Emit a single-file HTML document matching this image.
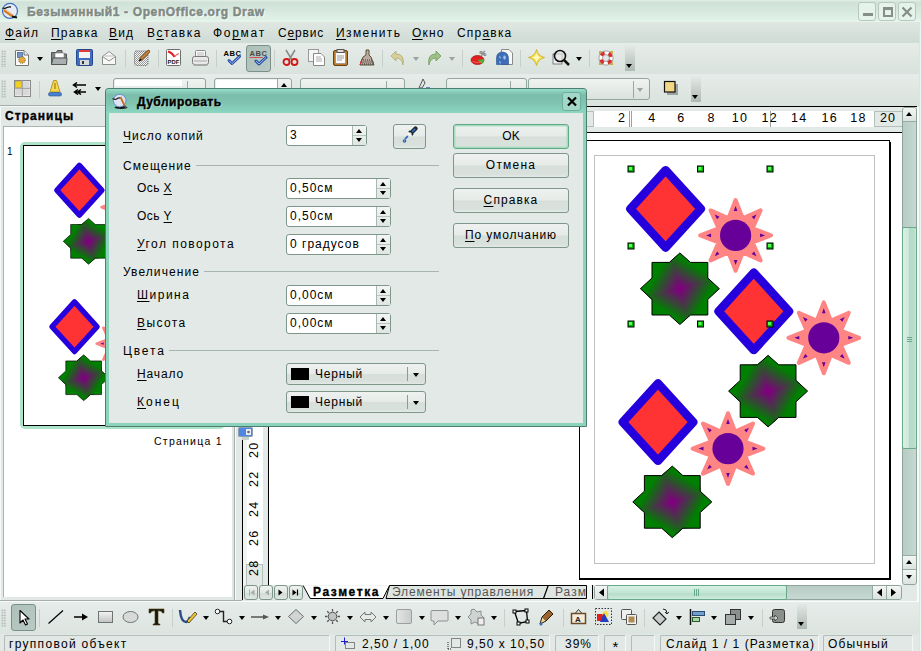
<!DOCTYPE html>
<html><head><meta charset="utf-8">
<style>
*{box-sizing:border-box}
html,body{margin:0;padding:0}
body{width:921px;height:651px;overflow:hidden;position:relative;background:#e2e8e5;font-family:"Liberation Sans",sans-serif;font-size:12px;line-height:1;color:#000;letter-spacing:1px;white-space:nowrap}
.a{position:absolute}
u{text-decoration:underline;text-decoration-thickness:1px;text-underline-offset:2px}
#title{left:0;top:0;width:921px;height:22px;background:linear-gradient(#e4f0e8 0,#d0e1d7 10%,#d5e6dc 40%,#dff1e6 85%,#e6f6ec)}
#menu{left:0;top:22px;width:919px;height:21px;background:linear-gradient(#e0e7e3,#cfdbd5)}
#tb1{left:0;top:43px;width:919px;height:31px;background:linear-gradient(#e6ece9,#d9e2dd)}
#tb2{left:0;top:74px;width:919px;height:32px;background:linear-gradient(#e6ece9,#d9e2dd)}
#rborder{left:919px;top:22px;width:2px;height:629px;background:linear-gradient(90deg,#d3e9de 50%,#e8f7ef 50%)}
.mi{top:27px;font-size:12px;letter-spacing:1.2px}
.grip{width:5px;background-image:radial-gradient(circle,#a4b0aa 0.7px,transparent 1px);background-size:2.6px 2.6px}
.sep{width:1px;background:#c6cfca}
.dd{width:0;height:0;border-left:3.5px solid transparent;border-right:3.5px solid transparent;border-top:4px solid #000}
.ddg{border-top-color:#9aa5a0}
.ic{position:absolute}
.lbl{font-size:12px}
.spin{position:absolute;height:21px;background:#fff;border:1px solid #7f968b;border-radius:3px}
.spin .b{position:absolute;right:0;top:0;width:14px;height:19px;border-left:1px solid #a9b8b0;background:linear-gradient(#f2f5f3,#dfe6e2)}
.spin .b:after{content:"";position:absolute;left:0;right:0;top:9px;height:1px;background:#b9c6bf}
.up{position:absolute;left:3px;top:3px;width:0;height:0;border-left:3.5px solid transparent;border-right:3.5px solid transparent;border-bottom:4px solid #000}
.dn{position:absolute;left:3px;top:12px;width:0;height:0;border-left:3.5px solid transparent;border-right:3.5px solid transparent;border-top:4px solid #000}
.spin .t{position:absolute;left:3px;top:3px;font-size:12px}
.btn{position:absolute;left:453px;width:116px;height:25px;border:1px solid #7f968b;border-radius:3px;background:linear-gradient(#eef1ef 0%,#e6ebe8 48%,#d6dfda 52%,#d9e1dd 88%,#e3e9e6 100%);text-align:center}
.btn span{position:absolute;left:0;right:0;top:5px}
.combo{position:absolute;border:1px solid #7f968b;border-radius:3px;background:linear-gradient(#eef1ef 0%,#e6ebe8 48%,#d6dfda 52%,#d9e1dd 88%,#e3e9e6 100%)}
.gline{position:absolute;height:1px;background:#a7b5ae}
.st{position:absolute;top:635px;height:16px;border:1px solid #b3bdb8;border-right-color:#f4f8f6;border-bottom:none;border-radius:2px 2px 0 0}
.stt{position:absolute;top:638px;font-size:12px;letter-spacing:1.2px}
.rn{position:absolute;top:112px;font-size:12.5px;letter-spacing:1.2px}
.vn{position:absolute;font-size:12.5px;letter-spacing:1.3px;transform:rotate(-90deg);transform-origin:0 0}
</style></head><body>
<!-- title bar -->
<div class="a" id="title"></div>
<div class="a" id="rborder"></div>
<svg class="ic" style="left:0;top:0" width="22" height="22" viewBox="0 0 22 22">
 <circle cx="10" cy="10.9" r="7.5" fill="#e6ebf5" stroke="#3f6fc0" stroke-width="1.2"/>
 <path d="M4 10 L12.5 16" stroke="#d8791e" stroke-width="3"/>
 <path d="M4.5 9.2 L12.5 14.8" stroke="#f4e0c0" stroke-width="0.8"/>
 <path d="M2.5 8 Q5 9 7 7.5 Q9 6.5 11 7" stroke="#111" stroke-width="1.3" fill="none"/>
 <path d="M12 16.5 L17 17.5" stroke="#111" stroke-width="2"/>
</svg>
<div class="a" style="left:27px;top:6px;font-weight:bold;font-size:12px;color:#7f8a84;-webkit-text-stroke:0.5px #7f8a84;text-shadow:0 0 2px #fff,1px 1px 1px #fff;letter-spacing:0.63px">Безымянный1 - OpenOffice.org Draw</div>
<!-- window buttons -->
<div class="a" style="left:858px;top:2px;width:18px;height:19px;border:1px solid #b7c8be;border-radius:3px;background:#e6f3eb"></div>
<div class="a" style="left:878px;top:2px;width:18px;height:19px;border:1px solid #b7c8be;border-radius:3px;background:#e6f3eb"></div>
<div class="a" style="left:898px;top:2px;width:18px;height:19px;border:1px solid #b7c8be;border-radius:3px;background:#e6f3eb"></div>
<div class="a" style="left:863px;top:13px;width:10px;height:3px;background:#858f8a"></div>
<div class="a" style="left:883px;top:7px;width:10px;height:10px;border:2px solid #858f8a;border-top-width:3px"></div>
<svg class="ic" style="left:901px;top:6px" width="12" height="12"><path d="M1.5 1.5L10.5 10.5M10.5 1.5L1.5 10.5" stroke="#858f8a" stroke-width="2.2"/></svg>

<!-- menu -->
<div class="a" id="menu"></div>
<div class="a mi" style="left:5px"><u>Ф</u>айл</div>
<div class="a mi" style="left:51px"><u>П</u>равка</div>
<div class="a mi" style="left:109px"><u>В</u>ид</div>
<div class="a mi" style="left:147px;letter-spacing:1.45px">В<u>с</u>тавка</div>
<div class="a mi" style="left:213px;letter-spacing:1.7px">Фо<u>р</u>мат</div>
<div class="a mi" style="left:278px;letter-spacing:0.85px">С<u>е</u>рвис</div>
<div class="a mi" style="left:336px;letter-spacing:1.4px"><u>И</u>зменить</div>
<div class="a mi" style="left:412px"><u>О</u>кно</div>
<div class="a mi" style="left:457px">Спр<u>а</u>вка</div>

<!-- toolbars -->
<div class="a" id="tb1"></div>
<div class="a" id="tb2"></div>
<div class="a grip" style="left:1px;top:50px;height:17px"></div>
<!-- new -->
<svg class="ic" style="left:14px;top:49px" width="16" height="18"><path d="M1.5 1.5 H10 L14.5 6 V16.5 H1.5Z" fill="#fbfbfa" stroke="#777"/><path d="M10 1.5 V6 H14.5" fill="#e6e6e6" stroke="#777"/><rect x="3.5" y="3.5" width="5" height="5" fill="#6f95d0" stroke="#3a5a90" stroke-width="0.7"/><circle cx="8" cy="11" r="3.3" fill="#e2a840" stroke="#7a5a20" stroke-dasharray="1 1"/></svg>
<div class="a dd" style="left:37px;top:57px"></div>
<!-- open -->
<svg class="ic" style="left:50px;top:49px" width="18" height="17"><path d="M1.5 3.5 H6 L7.5 1.5 H12 V5 H16.5 V15.5 H1.5Z" fill="#7d8387" stroke="#555"/><rect x="5" y="4" width="9" height="5" fill="#fff" stroke="#777" stroke-width="0.6"/><path d="M1.5 15.5 L3 9 H17 L16.5 15.5Z" fill="#a9aeb0" stroke="#555"/></svg>
<!-- save -->
<svg class="ic" style="left:76px;top:49px" width="17" height="17"><rect x="0.5" y="0.5" width="16" height="16" rx="1" fill="#3e6ec0" stroke="#24488a"/><rect x="3" y="1" width="11" height="2" fill="#e23a3a"/><rect x="3" y="3" width="11" height="6" fill="#f4f4f4"/><rect x="4" y="11" width="9" height="5" fill="#d6d9dc"/><rect x="6" y="12" width="2" height="3" fill="#333"/></svg>
<!-- mail -->
<svg class="ic" style="left:101px;top:50px" width="16" height="16"><path d="M1.5 6.5 L8 1.5 L14.5 6.5 V14.5 H1.5Z" fill="#f8f8f8" stroke="#8a8f8c"/><path d="M1.5 6.5 L8 11 L14.5 6.5" fill="none" stroke="#8a8f8c"/><path d="M3.5 6 H12.5" stroke="#bbb"/></svg>
<div class="a sep" style="left:125px;top:50px;height:17px"></div>
<!-- edit -->
<svg class="ic" style="left:133px;top:49px" width="18" height="18">
 <defs><pattern id="chk" width="2" height="2" patternUnits="userSpaceOnUse"><rect width="2" height="2" fill="#f4f4f4"/><rect width="1" height="1" fill="#9a9a9a"/><rect x="1" y="1" width="1" height="1" fill="#9a9a9a"/></pattern></defs>
 <rect x="1.5" y="2" width="13.5" height="14.5" rx="2" fill="url(#chk)" stroke="#444" stroke-width="0.8" stroke-dasharray="1 1"/>
 <path d="M15.5 2.5 L8 10" stroke="#7a4a1a" stroke-width="3.2" stroke-linecap="round"/>
 <path d="M15.5 2.5 L8 10" stroke="#d08a40" stroke-width="1.6" stroke-linecap="round"/>
 <path d="M8 10 L6.2 12" stroke="#111" stroke-width="1.6"/>
</svg>
<div class="a sep" style="left:158px;top:50px;height:17px"></div>
<!-- pdf -->
<svg class="ic" style="left:166px;top:49px" width="16" height="17">
 <rect x="0.5" y="0.5" width="14" height="16" rx="1" fill="#fff" stroke="#6e6e6e"/>
 <path d="M2 2.5 Q6 3.5 8.5 8" stroke="#e02020" stroke-width="2" fill="none"/><path d="M8.5 8 Q10 5.5 13 4.5" stroke="#f05050" stroke-width="1.2" fill="none"/>
 <text x="1.6" y="14.6" font-size="5.8" font-weight="bold" font-family="Liberation Sans" fill="#111" letter-spacing="0.1">PDF</text>
</svg>
<!-- print -->
<svg class="ic" style="left:192px;top:50px" width="17" height="17">
 <rect x="3.5" y="0.5" width="10" height="7" rx="1" fill="#f8f8f8" stroke="#8a8a8a"/>
 <path d="M5 3 H12 M5 5 H12" stroke="#bbb"/>
 <rect x="0.5" y="6.5" width="16" height="8" rx="2" fill="#e8e8e8" stroke="#7a7a7a"/>
 <rect x="2" y="10" width="13" height="2" fill="#c8c8c8"/>
 <rect x="1.5" y="14" width="14" height="2" rx="1" fill="#a8a8a8"/>
</svg>
<div class="a sep" style="left:216px;top:50px;height:17px"></div>
<!-- spell -->
<svg class="ic" style="left:223px;top:49px" width="19" height="17">
 <text x="0.5" y="7" font-size="7.6" font-weight="bold" font-family="Liberation Sans" fill="#000" letter-spacing="0.5">ABC</text>
 <path d="M6 11.5 L9 14.5 L16.5 7.5" fill="none" stroke="#2a4fa8" stroke-width="3" stroke-linejoin="round" stroke-linecap="round"/>
 <path d="M6 11.5 L9 14.5 L16.5 7.5" fill="none" stroke="#9ab8ec" stroke-width="1"/>
</svg>
<div class="a" style="left:246px;top:45px;width:25px;height:27px;border:1px solid #7a9088;border-radius:3px;background:linear-gradient(135deg,#adc0b9,#b8cac3)"></div>
<svg class="ic" style="left:249px;top:49px" width="19" height="17">
 <text x="0.5" y="7" font-size="7.6" font-weight="bold" font-family="Liberation Sans" fill="#4a4a4a" letter-spacing="0.5">ABC</text>
 <path d="M0.5 9 L1.5 8 L2.5 9 L3.5 8 L4.5 9 L5.5 8 L6.5 9 L7.5 8 L8.5 9 L9.5 8 L10.5 9 L11.5 8 L12.5 9 L13.5 8" fill="none" stroke="#e02020" stroke-width="0.9"/>
 <path d="M7 12 L10 15 L17 8.5" fill="none" stroke="#2a4fa8" stroke-width="3" stroke-linejoin="round" stroke-linecap="round"/>
 <path d="M7 12 L10 15 L17 8.5" fill="none" stroke="#9ab8ec" stroke-width="1"/>
</svg>
<div class="a sep" style="left:274px;top:50px;height:17px"></div>
<!-- cut -->
<svg class="ic" style="left:282px;top:49px" width="17" height="17"><path d="M4 1 L10 11 M13 1 L7 11" stroke="#888" stroke-width="1.5"/><circle cx="4.5" cy="13" r="3" fill="none" stroke="#d01818" stroke-width="1.8"/><circle cx="12.5" cy="13" r="3" fill="none" stroke="#d01818" stroke-width="1.8"/></svg>
<!-- copy -->
<svg class="ic" style="left:308px;top:49px" width="17" height="17"><rect x="0.5" y="0.5" width="10" height="12" fill="#f4f4f4" stroke="#999"/><path d="M5.5 4.5 H13 L16.5 8 V16.5 H5.5Z" fill="#fff" stroke="#888"/><path d="M8 8 H13 M8 10 H14 M8 12 H14" stroke="#aaa"/></svg>
<!-- paste -->
<svg class="ic" style="left:333px;top:49px" width="15" height="17"><rect x="0.5" y="1.5" width="14" height="15" rx="1.5" fill="#b8782a" stroke="#6a4214"/><rect x="2.5" y="3.5" width="10" height="11" fill="#fff" stroke="#888" stroke-width="0.6"/><rect x="4" y="0.5" width="7" height="3" fill="#ddd" stroke="#555"/><path d="M4 7 H11 M4 9 H11 M4 11 H9" stroke="#999"/></svg>
<!-- clone -->
<svg class="ic" style="left:358px;top:49px" width="17" height="17"><path d="M8 1 H11 V6 L13 8 L16 16 H2 L5 8 L8 6Z" fill="#bcaaa0" stroke="#553"/><path d="M3 11 H15 M2.5 13 H15.5 M2 15 H16" stroke="#333" stroke-dasharray="1 1"/><path d="M4 10 L2 16" stroke="#d03030"/></svg>
<div class="a sep" style="left:382px;top:50px;height:17px"></div>
<!-- undo -->
<svg class="ic" style="left:390px;top:50px" width="16" height="16"><path d="M6 1 L1 6 L6 11 V8 Q12 8 13 15 Q15 4 6 4Z" fill="#d8cf9a" stroke="#b0a870" stroke-width="0.8"/></svg>
<div class="a dd ddg" style="left:413px;top:57px"></div>
<!-- redo -->
<svg class="ic" style="left:426px;top:50px" width="16" height="16"><path d="M10 1 L15 6 L10 11 V8 Q4 8 3 15 Q1 4 10 4Z" fill="#9ec088" stroke="#6a9a5a" stroke-width="0.8"/></svg>
<div class="a dd ddg" style="left:449px;top:57px"></div>
<div class="a sep" style="left:462px;top:50px;height:17px"></div>
<!-- chart -->
<svg class="ic" style="left:470px;top:49px" width="18" height="17">
 <ellipse cx="7.5" cy="11" rx="6.5" ry="4.5" fill="#e02020" stroke="#a01010" stroke-width="0.7"/>
 <path d="M7.5 11 L14 10 Q14.5 13 12 15Z" fill="#50b030"/>
 <path d="M2.5 12.5 Q7 14.5 12 13" stroke="#f06a6a" stroke-width="0.8" fill="none"/>
 <text x="9.5" y="7" font-size="7.5" font-weight="bold" font-family="Liberation Sans" fill="#fff" stroke="#8a8a8a" stroke-width="0.6">%</text>
</svg>
<!-- navigator -->
<svg class="ic" style="left:496px;top:49px" width="17" height="17">
 <path d="M5.5 0.5 H13 L16.5 4 V15.5 H5.5Z" fill="#f8f8f8" stroke="#8a8a8a"/>
 <path d="M0.5 15.5 V9 Q0.5 3 7 3 Q12.5 3.5 12.5 10 V15.5Z" fill="#3d6cb8" stroke="#24508f" stroke-width="0.6"/>
 <path d="M3 7 L5 8 L4 10Z M8 6 L10 8 L9 11 L7 9Z M3 12 L5 13 L4 15Z" fill="#a8c4ea"/>
</svg>
<div class="a sep" style="left:520px;top:50px;height:17px"></div>
<!-- gallery star -->
<svg class="ic" style="left:528px;top:49px" width="17" height="17"><path d="M8.5 0.5 Q10 7 16.5 8.5 Q10 10 8.5 16.5 Q7 10 0.5 8.5 Q7 7 8.5 0.5Z" fill="#f8e050" stroke="#c8a820" stroke-width="0.8"/><path d="M8.5 4 Q9.3 7.7 13 8.5 Q9.3 9.3 8.5 13 Q7.7 9.3 4 8.5 Q7.7 7.7 8.5 4Z" fill="#fff8c0"/></svg>
<!-- zoom -->
<svg class="ic" style="left:552px;top:49px" width="18" height="18"><rect x="1" y="5" width="9" height="10" fill="#eee" stroke="#555" stroke-width="0.7"/><circle cx="8" cy="7" r="5.5" fill="#e8e8e8" fill-opacity="0.6" stroke="#111" stroke-width="1.6"/><path d="M12 11 L17 16" stroke="#111" stroke-width="2.5"/></svg>
<div class="a dd" style="left:576px;top:57px"></div>
<div class="a sep" style="left:589px;top:50px;height:17px"></div>
<!-- help -->
<svg class="ic" style="left:597px;top:49px" width="18" height="18">
 <path d="M2 2h3v2h-1v1h-2zM16 2h-3v2h1v1h2zM2 16h3v-2h-1v-1h-2zM16 16h-3v-2h1v-1h2z" fill="#c8a020" opacity="0.8"/>
 <circle cx="9" cy="9" r="5.3" fill="#e2e8e5" stroke="#fff" stroke-width="3.6"/>
 <circle cx="9" cy="9" r="5.3" fill="none" stroke="#e02828" stroke-width="3.6" stroke-dasharray="4.16 4.16" stroke-dashoffset="-2.08"/>
 <circle cx="9" cy="9" r="7.1" fill="none" stroke="#909090" stroke-width="0.8"/>
 <circle cx="9" cy="9" r="3.4" fill="none" stroke="#909090" stroke-width="0.8"/>
</svg>
<div class="a" style="left:625px;top:46px;width:10px;height:25px;background:linear-gradient(#e2e8e5,#aeb9b4)"></div>
<div class="a dd" style="left:626px;top:64px"></div>

<!-- toolbar 2 -->
<div class="a grip" style="left:1px;top:80px;height:18px"></div>
<svg class="ic" style="left:14px;top:80px" width="17" height="17"><rect x="0.5" y="0.5" width="16" height="16" fill="#e8e8e8" stroke="#888"/><rect x="1.5" y="1.5" width="6" height="6" fill="#f0d020" stroke="#c8a010" stroke-width="0.6"/><rect x="9" y="1.5" width="6" height="6" fill="#d8d8d8"/><rect x="1.5" y="9" width="6" height="6" fill="#d8d8d8"/><rect x="9" y="9" width="6" height="6" fill="#d8d8d8"/><path d="M8.3 0 V17 M0 8.3 H17" stroke="#999"/></svg>
<div class="a sep" style="left:39px;top:81px;height:17px"></div>
<svg class="ic" style="left:48px;top:80px" width="14" height="17"><path d="M5.5 0.5 H8.5 L12 12 H2Z" fill="#f5d850" stroke="#b89a20"/><path d="M7 3 V9" stroke="#8a7010"/><rect x="0.5" y="12.5" width="13" height="3.5" rx="1.5" fill="#4a80d0" stroke="#2a5090" stroke-width="0.6"/></svg>
<svg class="ic" style="left:72px;top:82px" width="15" height="13"><path d="M14 3 H2 M5 0.5 L1.5 3 L5 5.5" fill="none" stroke="#000" stroke-width="1.5"/><path d="M14 10 H3 M6 7.5 L2.5 10 L6 12.5 M9 7.5 L5.5 10 L9 12.5" fill="none" stroke="#000" stroke-width="1.5"/></svg>
<div class="a dd" style="left:95px;top:87px"></div>
<!-- combo boxes -->
<div class="a" style="left:113px;top:78px;width:93px;height:22px;border:1px solid #91a69d;border-radius:3px;background:linear-gradient(#f0f3f1,#dae2de)"></div>
<div class="a" style="left:115px;top:80px;width:67px;height:6px;background:#fff"></div>
<div class="a" style="left:187px;top:81px;width:1px;height:17px;background:#9aa8a1"></div>
<div class="a" style="left:214px;top:78px;width:78px;height:22px;border:1px solid #91a69d;border-radius:3px;background:linear-gradient(#f0f3f1,#dae2de)"></div>
<div class="a" style="left:216px;top:80px;width:61px;height:8px;background:#fff"></div>
<div class="a" style="left:277px;top:79px;width:1px;height:10px;background:#9aa8a1"></div>
<div class="a up" style="left:281px;top:83px"></div>
<div class="a" style="left:300px;top:78px;width:105px;height:22px;border:1px solid #91a69d;border-radius:3px;background:linear-gradient(#f0f3f1,#dae2de)"></div>
<div class="a" style="left:386px;top:81px;width:1px;height:17px;background:#9aa8a1"></div>
<svg class="ic" style="left:417px;top:77px" width="14" height="12"><path d="M2 11 L6 2 L8 6 L5 11Z" fill="none" stroke="#555"/><path d="M9 11 H13" stroke="#4060c0" stroke-width="1.5"/></svg>
<div class="a" style="left:446px;top:78px;width:81px;height:22px;border:1px solid #91a69d;border-radius:3px;background:linear-gradient(#f0f3f1,#dae2de)"></div>
<div class="a" style="left:510px;top:81px;width:1px;height:17px;background:#9aa8a1"></div>
<div class="a" style="left:528px;top:78px;width:122px;height:22px;border:1px solid #91a69d;border-radius:3px;background:linear-gradient(#f0f3f1,#dae2de)"></div>
<div class="a" style="left:633px;top:81px;width:1px;height:17px;background:#9aa8a1"></div>
<div class="a dd ddg" style="left:637px;top:88px"></div>
<svg class="ic" style="left:663px;top:80px" width="17" height="16"><rect x="4" y="4" width="11" height="11" fill="#8a9490" opacity="0.8"/><rect x="1.5" y="1.5" width="10.5" height="10.5" fill="#f2d784" stroke="#111" stroke-width="1.2"/></svg>
<div class="a" style="left:691px;top:77px;width:10px;height:25px;background:linear-gradient(#e2e8e5,#aeb9b4)"></div>
<div class="a dd" style="left:692px;top:95px"></div>



<!-- main area -->
<!-- sidebar -->
<div class="a" style="left:0;top:105px;width:243px;height:1px;background:#a3aea8"></div>
<div class="a" style="left:0;top:106px;width:234px;height:495px;border-left:1px solid #f4f8f6;border-top:1px solid #f4f8f6"></div>
<div class="a" style="left:5px;top:110px;font-weight:bold;font-size:12px;letter-spacing:1.05px;-webkit-text-stroke:0.35px #000">Страницы</div>
<div class="a" style="left:3px;top:126px;width:229px;height:471px;background:#fff;border:1px solid #aab5af;border-bottom:none;border-right:none"></div><div class="a" style="left:232px;top:126px;width:2px;height:474px;background:#dde6e1"></div><div class="a" style="left:234px;top:106px;width:1px;height:494px;background:#a3aea8"></div><div class="a" style="left:235px;top:106px;width:1px;height:494px;background:#fbfdfc"></div>
<div class="a" style="left:7px;top:147px;font-size:10px;letter-spacing:0">1</div>
<div class="a" style="left:20px;top:142px;width:205px;height:287px;border:3px solid #ade3c9;border-radius:5px"></div>
<div class="a" style="left:23px;top:145px;width:199px;height:281px;border:1px solid #000;background:#fff;overflow:hidden">
 <svg width="199" height="281" style="position:absolute;left:0;top:0">
  <g transform="translate(0.6,0.8) scale(0.64)"><use href="#page3"/></g>
 </svg>
</div>
<div class="a" style="left:154px;top:436px;font-size:10.5px;letter-spacing:1.25px">Страница 1</div>

<!-- draw view frame -->
<div class="a" style="left:243px;top:106px;width:674px;height:1px;background:#000"></div>
<!-- horizontal ruler -->
<div class="a" style="left:243px;top:107px;width:659px;height:25px;background:#e3e9e6"></div>
<div class="a" style="left:269px;top:111px;width:633px;height:16px;background:#fff"></div>
<div class="a" style="left:580px;top:111px;width:14px;height:16px;background:#e3e9e6;border:1px solid #b5c0ba"></div>
<div class="a" style="left:874px;top:111px;width:28px;height:16px;background:#e3e9e6;border:1px solid #b5c0ba;border-right:none"></div>
<div class="a" style="left:629px;top:111px;width:3px;height:16px;border-left:1px solid #9aa49f;border-right:1px solid #9aa49f"></div>
<div class="a" style="left:770px;top:111px;width:1px;height:16px;background:#9aa49f"></div>
<div class="rn" style="left:618.1px">2</div>
<div class="rn" style="left:648.3px">4</div>
<div class="rn" style="left:677.2px">6</div>
<div class="rn" style="left:707.5px">8</div>
<div class="rn" style="left:731.8px">10</div>
<div class="rn" style="left:761.5px">12</div>
<div class="rn" style="left:791.0px">14</div>
<div class="rn" style="left:821.5px">16</div>
<div class="rn" style="left:850.3px">18</div>
<div class="rn" style="left:879.9px">20</div>
<div class="a" style="left:243px;top:132px;width:659px;height:1px;background:#000"></div>
<!-- vertical ruler -->
<div class="a" style="left:242px;top:133px;width:1px;height:467px;background:#000"></div>
<div class="a" style="left:243px;top:133px;width:25px;height:452px;background:#e3e9e6"></div>
<div class="a" style="left:243px;top:133px;width:20px;height:452px;background:linear-gradient(90deg,#eef5f2 4px,#fff 4px)"></div>
<div class="a" style="left:246px;top:564px;width:17px;height:21px;background:#e3e9e6;border:1px solid #b5c0ba;border-bottom:none"></div>
<div class="a" style="left:268px;top:133px;width:1px;height:452px;background:#000"></div>
<div class="vn" style="left:248px;top:458px">20</div>
<div class="vn" style="left:248px;top:487px">22</div>
<div class="vn" style="left:248px;top:516.5px">24</div>
<div class="vn" style="left:248px;top:546px">26</div>
<div class="vn" style="left:248px;top:575.5px">28</div>
<!-- ruler corner icon -->
<svg class="ic" style="left:237px;top:426px" width="17" height="16" viewBox="0 0 17 16">
 <rect x="1.5" y="1.5" width="14" height="9" rx="1" fill="#4f86e0" stroke="#8aa0b8"/>
 <rect x="9" y="3" width="5" height="6" fill="#e8eef8"/>
 <circle cx="11.5" cy="6" r="1.3" fill="#667"/>
 <rect x="5" y="11" width="7" height="3" fill="#c8d0cc"/>
</svg>
<!-- canvas -->
<div class="a" style="left:269px;top:133px;width:633px;height:452px;background:#fff;overflow:hidden">
 <svg width="633" height="452" style="position:absolute;left:0;top:0">
  <defs>
   <radialGradient id="gg" cx="50%" cy="50%" r="55%">
    <stop offset="0" stop-color="#8a0090"/>
    <stop offset="0.35" stop-color="#5a3a6a"/>
    <stop offset="0.75" stop-color="#1a6a1a"/>
    <stop offset="1" stop-color="#107510"/>
   </radialGradient>
   <g id="grp">
    <polygon points="0,-38.8 35.3,0 0,38.8 -35.3,0" fill="#ff3333" stroke="#2600dc" stroke-width="8.4" stroke-linejoin="round"/>
    <g transform="translate(70,26.5)">
     <polygon points="0.0,-35.4 7.1,-17.1 25.0,-25.0 17.1,-7.1 35.4,0.0 17.1,7.1 25.0,25.0 7.1,17.1 0.0,35.4 -7.1,17.1 -25.0,25.0 -17.1,7.1 -35.4,0.0 -17.1,-7.1 -25.0,-25.0 -7.1,-17.1" fill="#ff8585" stroke="#ff8585" stroke-width="4" stroke-linejoin="round"/>
     <circle r="15.6" fill="#660099"/>
     <path d="M0.0,-29.5L1.8,-24.5L-1.8,-24.5ZM20.9,-20.9L18.6,-16.1L16.1,-18.6ZM29.5,0.0L24.5,1.8L24.5,-1.8ZM20.9,20.9L16.1,18.6L18.6,16.1ZM0.0,29.5L-1.8,24.5L1.8,24.5ZM-20.9,20.9L-18.6,16.1L-16.1,18.6ZM-29.5,0.0L-24.5,-1.8L-24.5,1.8ZM-20.9,-20.9L-16.1,-18.6L-18.6,-16.1Z" fill="#660099"/>
    </g>
    <g transform="translate(14.3,79.8)">
     <clipPath id="sc"><polygon points="0,-35.8 10.6,-26.3 27.9,-26.3 27.9,-10.7 39.5,0 27.9,10.7 27.9,26.3 10.6,26.3 0,35.8 -10.6,26.3 -27.9,26.3 -27.9,10.7 -39.5,0 -27.9,-10.7 -27.9,-26.3 -10.6,-26.3"/></clipPath>
     <g clip-path="url(#sc)"><rect x="-40" y="-40" width="80" height="80" fill="#008000"/><g transform="rotate(30)"><rect x="-28.0" y="-28.0" width="56.0" height="56.0" fill="rgb(0,128,0)"/><rect x="-26.0" y="-26.0" width="52.0" height="52.0" fill="rgb(9,118,9)"/><rect x="-24.0" y="-24.0" width="48.0" height="48.0" fill="rgb(19,108,19)"/><rect x="-22.0" y="-22.0" width="44.0" height="44.0" fill="rgb(29,98,29)"/><rect x="-20.0" y="-20.0" width="40.0" height="40.0" fill="rgb(39,88,39)"/><rect x="-18.0" y="-18.0" width="36.0" height="36.0" fill="rgb(49,78,49)"/><rect x="-16.0" y="-16.0" width="32.0" height="32.0" fill="rgb(59,68,59)"/><rect x="-14.0" y="-14.0" width="28.0" height="28.0" fill="rgb(68,59,68)"/><rect x="-12.0" y="-12.0" width="24.0" height="24.0" fill="rgb(78,49,78)"/><rect x="-10.0" y="-10.0" width="20.0" height="20.0" fill="rgb(88,39,88)"/><rect x="-8.0" y="-8.0" width="16.0" height="16.0" fill="rgb(98,29,98)"/><rect x="-6.0" y="-6.0" width="12.0" height="12.0" fill="rgb(108,19,108)"/><rect x="-4.0" y="-4.0" width="8.0" height="8.0" fill="rgb(118,9,118)"/><rect x="-2.0" y="-2.0" width="4.0" height="4.0" fill="rgb(128,0,128)"/></g></g>
     <polygon points="0,-35.8 10.6,-26.3 27.9,-26.3 27.9,-10.7 39.5,0 27.9,10.7 27.9,26.3 10.6,26.3 0,35.8 -10.6,26.3 -27.9,26.3 -27.9,10.7 -39.5,0 -27.9,-10.7 -27.9,-26.3 -10.6,-26.3" fill="none" stroke="#000" stroke-width="1"/>
    </g>
   </g>
   <g id="page3">
        <use href="#grp" x="85.6" y="67.9"/>
    <use href="#grp" x="173.8" y="170.3"/>
    <use href="#grp" x="78" y="281.1"/>
   </g>
   <g id="hdl"><rect x="-3" y="-3" width="6" height="6" fill="#00b800" stroke="#000"/><rect x="-2" y="-2" width="3" height="3" fill="#5f5"/></g>
  </defs>
  <g transform="translate(311,8)">
   <rect x="-0.5" y="-0.5" width="310" height="438" fill="#fff" stroke="#000" stroke-width="1"/>
   <path d="M310 1 V438 H-1" fill="none" stroke="#000" stroke-width="2"/>
   <rect x="14.5" y="14.5" width="280" height="408" fill="none" stroke="#c0c0c0"/>
   <use href="#grp" x="85.6" y="67.9"/>
   <use href="#grp" x="173.8" y="170.3"/>
   <use href="#grp" x="78" y="281.1"/>
  </g>
  <g transform="translate(-269,-133)">
   <use href="#hdl" x="631" y="169"/><use href="#hdl" x="700.5" y="169"/><use href="#hdl" x="770" y="169"/>
   <use href="#hdl" x="631" y="246"/><use href="#hdl" x="770" y="246"/>
   <use href="#hdl" x="631" y="324"/><use href="#hdl" x="700.5" y="324"/><use href="#hdl" x="770" y="324"/>
  </g>
 </svg>
</div>
<!-- vertical scrollbar -->
<div class="a" style="left:917px;top:107px;width:2px;height:494px;background:#f6faf8"></div>
<div class="a" style="left:902px;top:107px;width:15px;height:478px;background:linear-gradient(90deg,#b6ccc4,#c6d8d2);border:1px solid #8fa59c;border-radius:3px"></div>
<div class="a" style="left:903px;top:108px;width:13px;height:14px;background:linear-gradient(#f3f6f4,#dbe3df);border-bottom:1px solid #98aaa2;border-radius:2px 2px 0 0"></div>
<div class="a up" style="left:906px;top:112px"></div>
<div class="a" style="left:902px;top:227px;width:15px;height:222px;background:linear-gradient(90deg,#d9f0e5 0%,#cbe9da 45%,#b4dbc7 50%,#b9dfcc 90%,#d2ecdf);border:1px solid #6aa88a;border-radius:2px"></div>
<div class="a" style="left:907px;top:337px;width:5px;height:5px;border-top:1px solid #6aa88a;border-bottom:1px solid #6aa88a"></div>
<div class="a" style="left:907px;top:339px;width:5px;height:1px;background:#6aa88a"></div>
<div class="a" style="left:903px;top:555px;width:13px;height:15px;background:linear-gradient(#f3f6f4,#dbe3df);border-top:1px solid #98aaa2;border-bottom:1px solid #98aaa2"></div>
<div class="a up" style="left:906px;top:560px"></div>
<div class="a" style="left:903px;top:570px;width:13px;height:14px;background:linear-gradient(#f3f6f4,#dbe3df);border-radius:0 0 2px 2px"></div>
<div class="a dn" style="left:906px;top:575px"></div>
<!-- bottom tabs + h scrollbar -->
<div class="a" style="left:243px;top:585px;width:674px;height:16px;background:#e3e9e6"></div>
<div class="a" style="left:244px;top:585px;width:14px;height:15px;border:1px solid #7f968b;border-radius:3px;background:linear-gradient(#eef2f0,#e2e8e5 50%,#d3ddd8 55%,#dfe6e2)"></div>
<div class="a" style="left:259px;top:585px;width:14px;height:15px;border:1px solid #7f968b;border-radius:3px;background:linear-gradient(#eef2f0,#e2e8e5 50%,#d3ddd8 55%,#dfe6e2)"></div>
<div class="a" style="left:274px;top:585px;width:14px;height:15px;border:1px solid #7f968b;border-radius:3px;background:linear-gradient(#eef2f0,#e2e8e5 50%,#d3ddd8 55%,#dfe6e2)"></div>
<div class="a" style="left:289px;top:585px;width:14px;height:15px;border:1px solid #7f968b;border-radius:3px;background:linear-gradient(#eef2f0,#e2e8e5 50%,#d3ddd8 55%,#dfe6e2)"></div>
<svg class="ic" style="left:244px;top:585px" width="60" height="15">
 <path d="M5.5 4.5v6" stroke="#a3aea9"/><path d="M10.5 4.5v6L6.5 7.5Z" fill="#a3aea9"/>
 <path d="M25 4.5v6L21 7.5Z" fill="#a3aea9"/>
 <path d="M34.5 4.5v6L38.5 7.5Z" fill="#000"/>
 <path d="M48.5 4.5v6L52.5 7.5Z" fill="#000"/><path d="M53.5 4.5v6" stroke="#000" stroke-width="1.2"/>
</svg>
<!-- tabs -->
<div class="a" style="left:303px;top:585px;width:290px;height:15px;background:#e3e9e6"></div>
<svg class="ic" style="left:300px;top:584px" width="295" height="17">
 <path d="M86 14.5 L89.5 1.5 H286.5 V14.5 Z" fill="#dfe6e2" stroke="#000"/>
 <path d="M248.2 1.5 L243.5 14.5" stroke="#000" stroke-width="1.2"/>
 <path d="M3.1 1.5 L10.2 14.5 H83 L89.5 1.5 Z" fill="#fff"/>
 <path d="M3.1 1.5 L10.2 14.5 H83 L89.5 1.5" fill="none" stroke="#000"/>
 <rect x="287" y="1" width="5" height="14" fill="#f2f6f4"/>
 <path d="M292.5 1 V15" stroke="#000"/>
</svg>
<div class="a" style="left:313px;top:586px;font-weight:bold;font-size:12px;letter-spacing:1.6px;-webkit-text-stroke:0.35px #000">Разметка</div>
<div class="a" style="left:392px;top:586px;font-size:12px;letter-spacing:0.83px;color:#555">Элементы управления</div>
<div class="a" style="left:555px;top:586px;width:31px;overflow:hidden;font-size:12px;letter-spacing:1px;color:#555">Разметка</div>
<!-- h scrollbar -->
<div class="a" style="left:594px;top:585px;width:308px;height:15px;background:linear-gradient(#b8ccc5,#c7d8d2);border:1px solid #8fa59c;border-radius:3px"></div>
<div class="a" style="left:595px;top:586px;width:13px;height:13px;background:linear-gradient(#f3f6f4,#dbe3df);border-right:1px solid #98aaa2"></div>
<svg class="ic" style="left:597px;top:588px" width="9" height="9"><path d="M7 0.5V8.5L2 4.5Z" fill="#000"/></svg>
<div class="a" style="left:607px;top:585px;width:180px;height:15px;background:linear-gradient(#d9f0e5,#c3e6d5 50%,#b6dcc9 60%,#cdebdc);border:1px solid #6aa88a;border-radius:2px"></div>
<svg class="ic" style="left:693px;top:589px" width="8" height="7"><path d="M1.5 0V7M3.5 0V7M5.5 0V7" stroke="#6aa88a"/></svg>
<div class="a" style="left:872px;top:586px;width:15px;height:13px;background:linear-gradient(#f3f6f4,#dbe3df);border-left:1px solid #98aaa2;border-right:1px solid #98aaa2"></div>
<div class="a" style="left:887px;top:586px;width:14px;height:13px;background:linear-gradient(#f3f6f4,#dbe3df);border-radius:0 2px 2px 0"></div>
<svg class="ic" style="left:875px;top:588px" width="24" height="9"><path d="M7 0.5V8.5L2 4.5Z M16 0.5V8.5L21 4.5Z" fill="#000"/></svg>


<!-- bottom toolbar + status -->
<div class="a" style="left:0;top:600px;width:242px;height:1px;background:#a3aea8"></div><div class="a" style="left:0;top:601px;width:919px;height:33px;background:linear-gradient(#e6ece9,#dce4e0);border-top:1px solid #f8fbf9"></div>
<div class="a grip" style="left:1px;top:609px;height:18px"></div>
<div class="a" style="left:11px;top:604px;width:25px;height:27px;border:1px solid #7a9088;border-radius:3px;background:linear-gradient(135deg,#adc0b9,#b8cac3)"></div>
<svg class="ic" style="left:17px;top:609px" width="14" height="17"><path d="M3 1.5 V14 L6 11 L8.5 16 L10.5 15 L8 10 H12 Z" fill="#fff" stroke="#000" stroke-width="1.1" stroke-linejoin="round"/></svg>
<div class="a sep" style="left:39px;top:609px;height:18px"></div>
<svg class="ic" style="left:47px;top:609px" width="18" height="16"><path d="M1.5 14.5 L16 1.5" stroke="#000" stroke-width="1.2"/></svg>
<svg class="ic" style="left:73px;top:612px" width="16" height="10"><path d="M1 5 H10" stroke="#000" stroke-width="1.5"/><path d="M9 1.5 L15 5 L9 8.5Z" fill="#000"/></svg>
<div class="a" style="left:98px;top:611px;width:15px;height:12px;border:1px solid #6e7571;background:linear-gradient(#f2f2f2,#c4c4c4)"></div>
<svg class="ic" style="left:122px;top:610px" width="17" height="14"><ellipse cx="8.5" cy="7" rx="7.5" ry="5.5" fill="#d8dada" stroke="#707673"/></svg>
<svg class="ic" style="left:148px;top:608px" width="17" height="18" viewBox="0 0 17 18"><path d="M1 1 H16 V5 H14.5 Q14 2.8 11 2.8 H10 V15 Q10 16 12 16.2 V17 H5 V16.2 Q7 16 7 15 V2.8 H6 Q3 2.8 2.5 5 H1 Z" fill="#1a1a0a" stroke="#4a3c10" stroke-width="0.6"/></svg>
<div class="a sep" style="left:172px;top:609px;height:18px"></div>
<svg class="ic" style="left:178px;top:608px" width="20" height="17"><path d="M2 2 Q3 14 8 14 Q10 14 12 9" fill="none" stroke="#2c4b8a" stroke-width="2.5"/><path d="M9 13 L17 4 L19 6 L11 15 Z" fill="#f2c230" stroke="#3a3a20" stroke-width="0.8"/></svg>
<div class="a dd" style="left:203px;top:616px"></div>
<svg class="ic" style="left:214px;top:608px" width="19" height="17"><circle cx="3.5" cy="3.5" r="2.3" fill="#fff" stroke="#222"/><circle cx="15.5" cy="13.5" r="2.3" fill="#fff" stroke="#222"/><path d="M5.5 3.5 H9.5 V13.5 H13.2" fill="none" stroke="#222" stroke-width="1.4"/></svg>
<div class="a dd" style="left:239px;top:616px"></div>
<svg class="ic" style="left:250px;top:613px" width="20" height="8"><path d="M1 4 H14" stroke="#555" stroke-width="1.5"/><path d="M13 1.5 L19 4 L13 6.5Z" fill="#555"/></svg>
<div class="a dd" style="left:275px;top:616px"></div>
<svg class="ic" style="left:287px;top:608px" width="18" height="17"><path d="M9 1.5 L16.5 8.5 L9 15.5 L1.5 8.5Z" fill="#d2d4d3" stroke="#6a706d" stroke-width="1"/></svg>
<div class="a dd" style="left:311px;top:616px"></div>
<svg class="ic" style="left:324px;top:608px" width="17" height="17"><circle cx="8.5" cy="8.5" r="4.2" fill="#bfc3c1" stroke="#555"/><path d="M8.5 1V3.5M8.5 13.5V16M1 8.5H3.5M13.5 8.5H16M3.2 3.2L5 5M12 12L13.8 13.8M13.8 3.2L12 5M5 12L3.2 13.8" stroke="#555" stroke-width="1.3"/></svg>
<div class="a dd" style="left:347px;top:616px"></div>
<svg class="ic" style="left:359px;top:610px" width="18" height="14"><path d="M1 7 L6 2 V4.5 H12 V2 L17 7 L12 12 V9.5 H6 V12 Z" fill="#e6e9e8" stroke="#737a76" stroke-width="1"/></svg>
<div class="a dd" style="left:383px;top:616px"></div>
<div class="a" style="left:396px;top:609px;width:16px;height:15px;border:1px solid #9aa09d;border-radius:2px;background:linear-gradient(90deg,#e2e4e3,#c9cdcb)"></div>
<div class="a dd" style="left:419px;top:616px"></div>
<svg class="ic" style="left:430px;top:609px" width="19" height="17"><path d="M2 1.5 H17 Q18 1.5 18 2.5 V11 Q18 12 17 12 H8 L4 16 V12 H2 Q1 12 1 11 V2.5 Q1 1.5 2 1.5Z" fill="#dcdfdd" stroke="#8b918e"/></svg>
<div class="a dd" style="left:455px;top:616px"></div>
<svg class="ic" style="left:467px;top:608px" width="19" height="18"><path d="M7 1 L10 4 L14 3 L14 7 L17 10 L13 12 L12 16 L8 14 L4 16 L4 12 L1 9 L4 6 L4 2 Z" fill="#cfd3d1" stroke="#8b918e"/><rect x="11" y="10" width="6" height="7" fill="#eee" stroke="#777"/></svg>
<div class="a dd" style="left:491px;top:616px"></div>
<div class="a sep" style="left:504px;top:609px;height:18px"></div>
<svg class="ic" style="left:512px;top:608px" width="18" height="18"><path d="M2.5 3.5 L14.5 2.5 L15.5 13.5 L6.5 15.5 Z" fill="none" stroke="#000" stroke-width="1.3"/><g fill="#fff" stroke="#000"><rect x="1" y="2" width="3" height="3"/><rect x="13" y="1" width="3" height="3"/><rect x="14" y="12" width="3" height="3"/><rect x="5" y="14" width="3" height="3"/></g></svg>
<svg class="ic" style="left:539px;top:608px" width="16" height="18"><path d="M10 2 L14 6 L7 13 L3 9 Z" fill="#9b6230" stroke="#2a1a0a"/><path d="M3 9 L1 16 L7 13" fill="#f0d8a0" stroke="#2a1a0a"/><circle cx="2" cy="16" r="1.5" fill="#3a6ac0"/></svg>
<div class="a sep" style="left:563px;top:609px;height:18px"></div>
<svg class="ic" style="left:570px;top:608px" width="17" height="17"><path d="M5.5 5 L8.5 1.5 L11.5 5" fill="none" stroke="#333"/><rect x="1.5" y="5.5" width="14" height="10" fill="#f4ecd8" stroke="#6b4a28" stroke-width="1.5"/><text x="5" y="14" font-size="8" font-weight="bold" font-family="Liberation Sans" fill="#222">A</text></svg>
<svg class="ic" style="left:595px;top:608px" width="17" height="17"><rect x="0.5" y="0.5" width="16" height="16" fill="none" stroke="#333" stroke-dasharray="1.5 1.5"/><rect x="2" y="6" width="7" height="7" fill="#e02020"/><circle cx="10.5" cy="6" r="3" fill="#f8e040"/><path d="M9 5 L14 14 H5Z" fill="#2040c0"/></svg>
<svg class="ic" style="left:620px;top:608px" width="18" height="18"><rect x="1.5" y="1.5" width="10" height="10" rx="1" fill="#eee" stroke="#555"/><rect x="6.5" y="6.5" width="10" height="10" rx="1" fill="#f2f2f2" stroke="#555"/><rect x="8.5" y="8.5" width="6" height="6" fill="#b08a50"/></svg>
<div class="a sep" style="left:644px;top:609px;height:18px"></div>
<svg class="ic" style="left:651px;top:608px" width="19" height="18"><path d="M8 4 L15 11 L9 17 L2 10 Z" fill="#c8cccb" stroke="#222" stroke-width="1.2"/><path d="M12 1 Q16 1 16 5" fill="none" stroke="#222"/><path d="M14 4 L16 6 L18 4" fill="none" stroke="#222"/></svg>
<div class="a dd" style="left:676px;top:616px"></div>
<svg class="ic" style="left:689px;top:608px" width="17" height="18"><path d="M1.5 1 V17" stroke="#111" stroke-width="1.5"/><rect x="3.5" y="3.5" width="12" height="4" fill="#6fa0d0" stroke="#2a4a70"/><rect x="3.5" y="9.5" width="7" height="4" fill="#a8d8a8" stroke="#2a5a2a"/></svg>
<div class="a dd" style="left:711px;top:616px"></div>
<svg class="ic" style="left:724px;top:608px" width="18" height="18"><rect x="6.5" y="1.5" width="10" height="10" fill="#8a908d" stroke="#333"/><rect x="1.5" y="6.5" width="10" height="10" fill="#a5aba8" stroke="#333"/></svg>
<div class="a dd" style="left:748px;top:616px"></div>
<div class="a sep" style="left:762px;top:609px;height:18px"></div>
<svg class="ic" style="left:769px;top:608px" width="17" height="17"><rect x="3.5" y="1.5" width="12" height="13" rx="2" fill="#8a8f8c" stroke="#333"/><path d="M1 9 H6 V7 L9 10 L6 13 V11 H1Z" fill="#cfd4d1" stroke="#333" stroke-width="0.7"/></svg>
<div class="a" style="left:797px;top:604px;width:10px;height:25px;background:linear-gradient(#e2e8e5,#aeb9b4)"></div>
<div class="a dd" style="left:798px;top:622px"></div>
<!-- status bar -->
<div class="a" style="left:0;top:634px;width:919px;height:17px;background:#e2e8e5"></div>
<div class="st" style="left:4px;width:326px"></div>
<div class="stt" style="left:9px;letter-spacing:1.3px">групповой объект</div>
<div class="st" style="left:335px;width:215px"></div>
<svg class="ic" style="left:340px;top:637px" width="16" height="13"><path d="M4.5 0.5 V7.5 M1 4.5 H8" stroke="#1b1bd0"/><rect x="5.5" y="5.5" width="9" height="6" fill="none" stroke="#222" stroke-dasharray="1 1"/></svg>
<div class="stt" style="left:362px;letter-spacing:1px">2,50 / 1,00</div>
<svg class="ic" style="left:447px;top:637px" width="16" height="13"><rect x="4.5" y="1.5" width="9" height="9" fill="none" stroke="#222" stroke-dasharray="1 1"/><path d="M1 5 V12 M1 12 H4" stroke="#222" stroke-dasharray="1 1"/></svg>
<div class="stt" style="left:467px;letter-spacing:1px">9,50 x 10,50</div>
<div class="st" style="left:555px;width:44px"></div>
<div class="stt" style="left:565px;letter-spacing:1px">39%</div>
<div class="st" style="left:604px;width:22px"></div>
<div class="stt" style="left:612.5px;top:638.5px;letter-spacing:0;font-size:15px">*</div>
<div class="st" style="left:631px;width:24px"></div>
<div class="st" style="left:660px;width:159px"></div>
<div class="stt" style="left:666px;letter-spacing:1.05px">Слайд 1 / 1 (Разметка)</div>
<div class="st" style="left:823px;width:90px"></div>
<div class="stt" style="left:828px;letter-spacing:1.1px">Обычный</div>


<!-- dialog -->
<div class="a" style="left:105px;top:88px;width:482px;height:339px;background:#4d7f70;border-radius:4px 4px 1px 1px"></div>
<div class="a" style="left:106px;top:89px;width:480px;height:337px;background:#8cd3be;border-radius:3px 3px 0 0"></div>
<div class="a" style="left:106px;top:89px;width:480px;height:24px;background:linear-gradient(#9adfcc,#8ad0bc 10%,#7bbdaa 25%,#7dc1ae 50%,#86cdb9 80%,#8cd6c2);border-radius:3px 3px 0 0"></div>
<div class="a" style="left:109px;top:113px;width:474px;height:310px;background:#e2e9e6"></div>
<svg class="ic" style="left:111px;top:92px" width="19" height="18" viewBox="0 0 19 18">
 <ellipse cx="10" cy="15.5" rx="6.5" ry="1.5" fill="#111"/>
 <circle cx="8.7" cy="8.6" r="6.3" fill="#dfe4f4" stroke="#5d86cc" stroke-width="0.9"/>
 <path d="M1.5 6.5 Q4 8 5.5 7 Q7.5 5.5 9.5 6" stroke="#222" stroke-width="1.2" fill="none"/>
 <path d="M9.5 5 L13.5 13.5" stroke="#c8701c" stroke-width="1.8"/>
 <path d="M13.5 13.5 L15 16" stroke="#555" stroke-width="1.5"/>
</svg>
<div class="a" style="left:137px;top:95.5px;font-weight:bold;font-size:12px;letter-spacing:0.48px;-webkit-text-stroke:0.35px #000;text-shadow:1px 1px 0 rgba(255,255,255,0.35)">Дублировать</div>
<div class="a" style="left:562px;top:92px;width:19px;height:19px;border:1px solid #6fae9a;border-radius:3px;background:#a3d8c8"></div>
<svg class="ic" style="left:565.5px;top:96px" width="12" height="11"><path d="M2 1.5L10 9.5M10 1.5L2 9.5" stroke="#000" stroke-width="2.2"/></svg>

<!-- labels -->
<div class="a lbl" style="left:123px;top:130px;letter-spacing:1px"><u>Ч</u>исло копий</div>
<div class="a lbl" style="left:123px;top:160px;letter-spacing:1.1px">Смещение</div>
<div class="gline" style="left:196px;top:165px;width:243px"></div>
<div class="a lbl" style="left:137px;top:182px;letter-spacing:0.4px">Ось <u>X</u></div>
<div class="a lbl" style="left:137px;top:210px;letter-spacing:0.4px">Ось <u>Y</u></div>
<div class="a lbl" style="left:137px;top:238px;letter-spacing:1.45px"><u>У</u>гол поворота</div>
<div class="a lbl" style="left:123px;top:266px;letter-spacing:1.1px">Увеличение</div>
<div class="gline" style="left:204px;top:271px;width:235px"></div>
<div class="a lbl" style="left:137px;top:289px;letter-spacing:1.5px"><u>Ш</u>ирина</div>
<div class="a lbl" style="left:137px;top:317px;letter-spacing:1.38px"><u>В</u>ысота</div>
<div class="a lbl" style="left:123px;top:345px;letter-spacing:1.85px">Цвета</div>
<div class="gline" style="left:169px;top:350px;width:270px"></div>
<div class="a lbl" style="left:137px;top:368px;letter-spacing:0.86px"><u>Н</u>ачало</div>
<div class="a lbl" style="left:137px;top:396px;letter-spacing:2px"><u>К</u>онец</div>

<!-- spins -->
<div class="spin" style="left:286px;top:125px;width:81px"><div class="t">3</div><div class="b"><div class="up"></div><div class="dn"></div></div></div>
<div class="spin" style="left:286px;top:178px;width:105px"><div class="t">0,50см</div><div class="b"><div class="up"></div><div class="dn"></div></div></div>
<div class="spin" style="left:286px;top:206px;width:105px"><div class="t">0,50см</div><div class="b"><div class="up"></div><div class="dn"></div></div></div>
<div class="spin" style="left:286px;top:234px;width:105px"><div class="t">0 градусов</div><div class="b"><div class="up"></div><div class="dn"></div></div></div>
<div class="spin" style="left:286px;top:285px;width:105px"><div class="t">0,00см</div><div class="b"><div class="up"></div><div class="dn"></div></div></div>
<div class="spin" style="left:286px;top:313px;width:105px"><div class="t">0,00см</div><div class="b"><div class="up"></div><div class="dn"></div></div></div>
<!-- pipette button -->
<div class="a" style="left:393px;top:124px;width:33px;height:25px;border:1px solid #7f968b;border-radius:3px;background:linear-gradient(#eef1ef 0%,#e6ebe8 48%,#d6dfda 52%,#d9e1dd 88%,#e3e9e6 100%)"></div>
<svg class="ic" style="left:400px;top:126px" width="18" height="18" viewBox="0 0 18 18">
 <path d="M12 6 L15.5 2.5" stroke="#1c2a38" stroke-width="4.2" stroke-linecap="round"/>
 <path d="M12.5 5.5 L14.8 3.2" stroke="#3e78c8" stroke-width="1.4" stroke-linecap="round"/>
 <path d="M9 5 L13 9" stroke="#1c2430" stroke-width="1.8"/>
 <path d="M11 7 L5.5 12.5" stroke="#fff" stroke-width="2.6"/>
 <path d="M11 7 L5.5 12.5" stroke="#9aa" stroke-width="0.4"/>
 <path d="M8 10 L5 13" stroke="#3a6cc0" stroke-width="2"/>
 <circle cx="4.5" cy="15" r="1.8" fill="#2e5cb0"/><circle cx="4.5" cy="15" r="0.6" fill="#cde"/>
</svg>
<!-- combos -->
<div class="combo" style="left:286px;top:363px;width:140px;height:22px"></div>
<div class="a" style="left:291px;top:368px;width:18px;height:12px;background:#000"></div>
<div class="a lbl" style="left:315px;top:368px;letter-spacing:0.8px">Черный</div>
<div class="a" style="left:407px;top:367px;width:1px;height:14px;background:#8a9c94"></div>
<div class="a dd" style="left:413px;top:373px"></div>
<div class="combo" style="left:286px;top:391px;width:140px;height:22px"></div>
<div class="a" style="left:291px;top:396px;width:18px;height:12px;background:#000"></div>
<div class="a lbl" style="left:315px;top:396px;letter-spacing:0.8px">Черный</div>
<div class="a" style="left:407px;top:395px;width:1px;height:14px;background:#8a9c94"></div>
<div class="a dd" style="left:413px;top:401px"></div>
<!-- buttons -->
<div class="btn" style="top:124px;height:25px;border-color:#5fa883;box-shadow:inset 0 0 0 1.5px #a9dcc0"><span style="letter-spacing:0">OK</span></div>
<div class="btn" style="top:153px"><span style="letter-spacing:1.2px">Отмена</span></div>
<div class="btn" style="top:188px"><span style="letter-spacing:1.1px"><u>С</u>правка</span></div>
<div class="btn" style="top:223px"><span style="letter-spacing:0.9px"><u>П</u>о умолчанию</span></div>

</body></html>
